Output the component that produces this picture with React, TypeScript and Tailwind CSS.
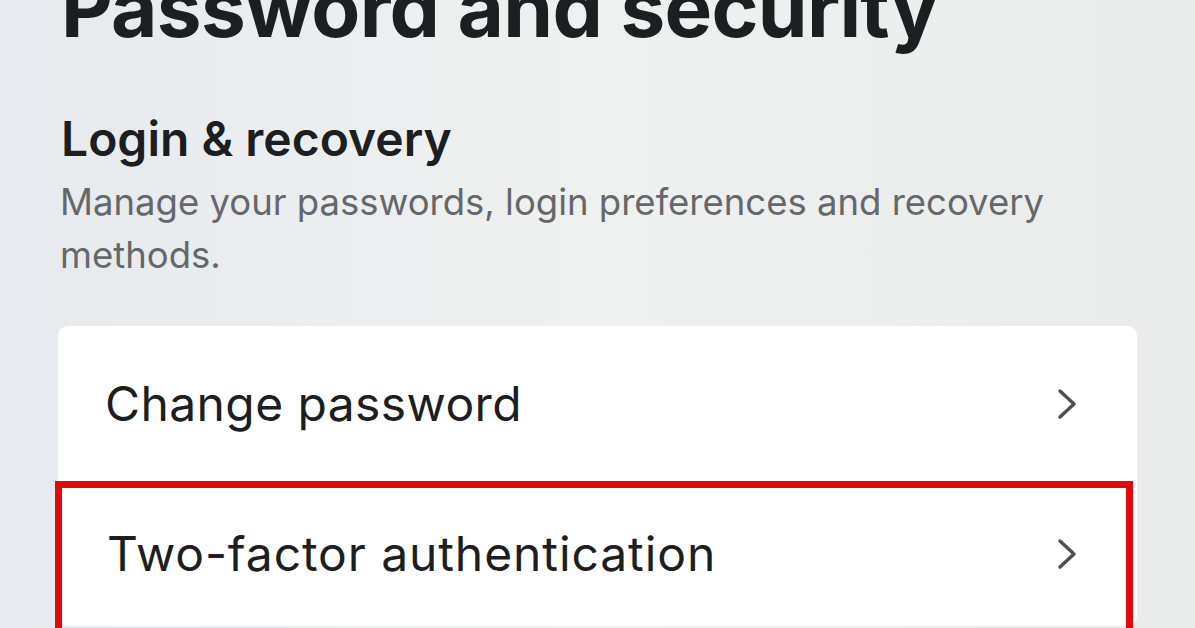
function Chevron() {
  return (
    <svg width="20" height="32" viewBox="0 0 20 32" fill="none" stroke="#4b4f56" strokeWidth={3.5} strokeLinecap="round" strokeLinejoin="round">
      <polyline points="3,3 17,16 3,29" />
    </svg>
  )
}

export default function App() {
  return (
    <div
      className="h-[628px] w-[1195px] overflow-hidden bg-gradient-to-r from-[#e7eaee] via-[#eff1f0] to-[#e9ecea] text-[#1c1e21]"
      style={{ fontFamily: 'Inter, "Noto Sans", sans-serif' }}
    >
      <div className="pl-[58px]">
        <h1 className="-mt-[32px] pl-[3px] text-[80px] leading-none font-bold tracking-[-0.7px] whitespace-nowrap">Password and security</h1>

        <h2 className="mt-[67px] pl-[3px] text-[48px] leading-none font-semibold">Login &amp; recovery</h2>
        <p className="mt-[13px] w-[1079px] pl-[2px] text-[36.5px] leading-[53px] text-[#65676b]">
          Manage your passwords, login preferences and recovery methods.
        </p>

        <div className="mt-[44px] w-[1079px] rounded-[10px] bg-white">
          <div className="flex h-[155px] items-center justify-between pr-[60px] pl-[47px]">
            <span className="text-[48px] leading-none tracking-[0.4px]">Change password</span>
            <Chevron />
          </div>
          <div className="relative flex h-[145px] items-center justify-between pr-[60px] pl-[49px]">
            <span className="text-[48px] leading-none tracking-[0.9px]">Two-factor authentication</span>
            <Chevron />
            <div className="absolute -left-[3px] right-[4px] top-0 -bottom-[10px] border-[7px] border-[#e00a0a]" />
          </div>
        </div>
      </div>
    </div>
  )
}
